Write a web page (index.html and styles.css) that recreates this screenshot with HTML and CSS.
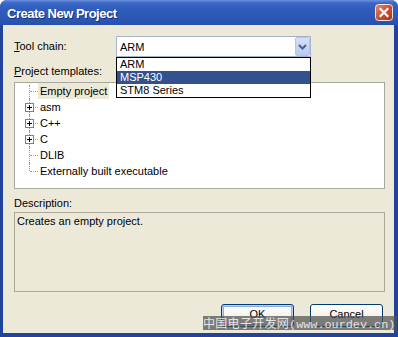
FILE: index.html
```html
<!DOCTYPE html>
<html lang="en">
<head>
  <meta charset="UTF-8" />
  <title>Create New Project</title>
  <link rel="stylesheet" href="styles.css">
</head>
<body>
  <div class="window">
    <div class="titlebar">
      <span class="title">Create New Project</span>
      <span class="close">
        <svg width="18" height="17" viewBox="0 0 18 17">
          <defs>
            <linearGradient id="red" x1="0" y1="0" x2="1" y2="1">
              <stop offset="0" stop-color="#e58a70"/>
              <stop offset="0.5" stop-color="#cf4f33"/>
              <stop offset="1" stop-color="#a8321e"/>
            </linearGradient>
          </defs>
          <rect x="0.5" y="0.5" width="17" height="16" rx="3" fill="url(#red)" stroke="#f3e4df"/>
          <path d="M5.5 5 L12.5 12 M12.5 5 L5.5 12" stroke="#fff" stroke-width="2.2" stroke-linecap="square"/>
        </svg>
      </span>
    </div>

    <div class="client">
      <div class="chain-row">
        <span class="field-label"><u>T</u>ool chain:</span>
        <div class="combo">
          <div class="combo-field">
            <span>ARM</span>
            <span class="combo-btn">
              <svg width="9" height="6" viewBox="0 0 9 6">
                <path d="M1 1 L4.5 4.5 L8 1" fill="none" stroke="#4d6185" stroke-width="2"/>
              </svg>
            </span>
          </div>
          <ul class="combo-list">
            <li>ARM</li>
            <li class="picked">MSP430</li>
            <li>STM8 Series</li>
          </ul>
        </div>
      </div>

      <div class="field-label block"><u>P</u>roject templates:</div>
      <div class="tree">
        <div class="node first"><span class="twig"></span><span class="name sel">Empty project</span></div>
        <div class="node"><span class="twig"><span class="plus"></span></span><span class="name">asm</span></div>
        <div class="node"><span class="twig"><span class="plus"></span></span><span class="name">C++</span></div>
        <div class="node"><span class="twig"><span class="plus"></span></span><span class="name">C</span></div>
        <div class="node"><span class="twig"></span><span class="name">DLIB</span></div>
        <div class="node last"><span class="twig"></span><span class="name">Externally built executable</span></div>
      </div>

      <div class="field-label block desc-label">Description:</div>
      <div class="desc">Creates an empty project.</div>

      <div class="buttons">
        <button class="btn default">OK</button>
        <button class="btn">Cancel</button>
      </div>
    </div>
  </div>

  <div class="watermark"><span class="cn">中国电子开发网</span>(www.ourdev.cn)</div>
</body>
</html>
```

FILE: styles.css
```css
body {
  margin: 0;
  background: #fff;
  font-family: "Liberation Sans", Arial, sans-serif;
  font-size: 11px;
  color: #000;
}
.window {
  width: 398px;
  height: 337px;
  display: flex;
  flex-direction: column;
  background: #21439b;
  border-radius: 7px 7px 0 0;
  overflow: hidden;
}
.titlebar {
  height: 25px;
  flex: none;
  display: flex;
  align-items: center;
  justify-content: space-between;
  padding: 0 5px 0 7px;
  background: linear-gradient(#6b8fdc 0%, #3a66c4 12%, #2f5bba 40%, #2c57b5 75%, #2550ab 100%);
}
.title {
  color: #fff;
  font-weight: bold;
  font-size: 13px;
  letter-spacing: -0.5px;
  text-shadow: 1px 1px 0 #16307a;
  padding-top: 1px;
}
.close {
  display: flex;
}
.client {
  flex: 1;
  margin: 0 4px 4px 3px;
  background: #ece9d8;
  padding: 11px 9px 0 11px;
}
.chain-row {
  display: flex;
  align-items: center;
  height: 21px;
}
.field-label {
  width: 102px;
  line-height: 13px;
}
.field-label.block {
  width: auto;
  margin-top: 8px;
}
.combo {
  position: relative;
  width: 195px;
  height: 21px;
}
.combo-field {
  box-sizing: border-box;
  height: 21px;
  border: 1px solid #a5b3c8;
  background: #fff;
  display: flex;
  align-items: center;
  justify-content: space-between;
  padding-left: 3px;
  padding-right: 0;
}
.combo-btn {
  box-sizing: border-box;
  width: 15px;
  height: 19px;
  background: linear-gradient(#d4e0fb, #b8cbf5);
  border: 1px solid #b4c4ea;
  border-radius: 2px;
  display: flex;
  align-items: center;
  justify-content: center;
}
.combo-list {
  position: absolute;
  top: 21px;
  left: 0;
  box-sizing: border-box;
  width: 195px;
  margin: 0;
  padding: 0;
  list-style: none;
  background: #fff;
  border: 1px solid #000;
}
.combo-list li {
  height: 13px;
  line-height: 13px;
  padding-left: 3px;
}
.combo-list li.picked {
  background: #33508f;
  color: #fff;
}
.tree {
  box-sizing: border-box;
  height: 107px;
  margin-top: 4px;
  border: 1px solid #a9a8a0;
  background: #fff;
}
.node {
  display: flex;
  height: 16px;
  line-height: 16px;
}
.twig {
  position: relative;
  width: 23px;
  flex: none;
}
.twig::before {
  content: "";
  position: absolute;
  left: 14px;
  top: 0;
  height: 16px;
  border-left: 1px dotted #9c9c9c;
}
.node.first .twig::before {
  top: 2px;
  height: 14px;
}
.node.last .twig::before {
  height: 8px;
}
.twig::after {
  content: "";
  position: absolute;
  left: 15px;
  top: 8px;
  width: 8px;
  border-top: 1px dotted #9c9c9c;
}
.plus {
  position: absolute;
  z-index: 1;
  left: 10px;
  top: 4px;
  box-sizing: border-box;
  width: 9px;
  height: 9px;
  border: 1px solid #808080;
  background: #fff;
}
.plus::before,
.plus::after {
  content: "";
  position: absolute;
  background: #000;
}
.plus::before {
  left: 1px;
  top: 3px;
  width: 5px;
  height: 1px;
}
.plus::after {
  left: 3px;
  top: 1px;
  width: 1px;
  height: 5px;
}
.name {
  padding: 0 2px;
}
.name.sel {
  background: #ece9d8;
}
.desc-label {
  margin-top: 6px;
}
.desc {
  box-sizing: border-box;
  height: 80px;
  margin-top: 2px;
  border: 1px solid #aca899;
  padding: 2px 2px;
  line-height: 13px;
}
.buttons {
  display: flex;
  justify-content: flex-end;
  gap: 16px;
  margin-top: 12px;
  padding-right: 2px;
}
.btn {
  box-sizing: border-box;
  width: 73px;
  height: 23px;
  border: 1px solid #003c74;
  border-radius: 3px;
  background: linear-gradient(#ffffff 0%, #f4f3ee 50%, #e6e4da 90%, #d6d0c5 100%);
  font-family: "Liberation Sans", Arial, sans-serif;
  font-size: 11px;
  color: #000;
  padding: 0 0 3px;
}
.btn.default {
  box-shadow: inset 0 0 0 1px #b8d0f5, inset 0 0 0 2px #89ade4;
}
.watermark {
  position: absolute;
  left: 203px;
  top: 316px;
  width: 194px;
  height: 14px;
  line-height: 14px;
  background: rgba(80, 80, 80, 0.72);
  color: #e4e4e4;
  font-family: "Liberation Mono", monospace;
  font-size: 11.8px;
  white-space: nowrap;
  overflow: hidden;
}
.watermark .cn {
  font-family: "Noto Sans CJK SC", sans-serif;
  font-size: 12px;
  letter-spacing: 0.3px;
}
```
